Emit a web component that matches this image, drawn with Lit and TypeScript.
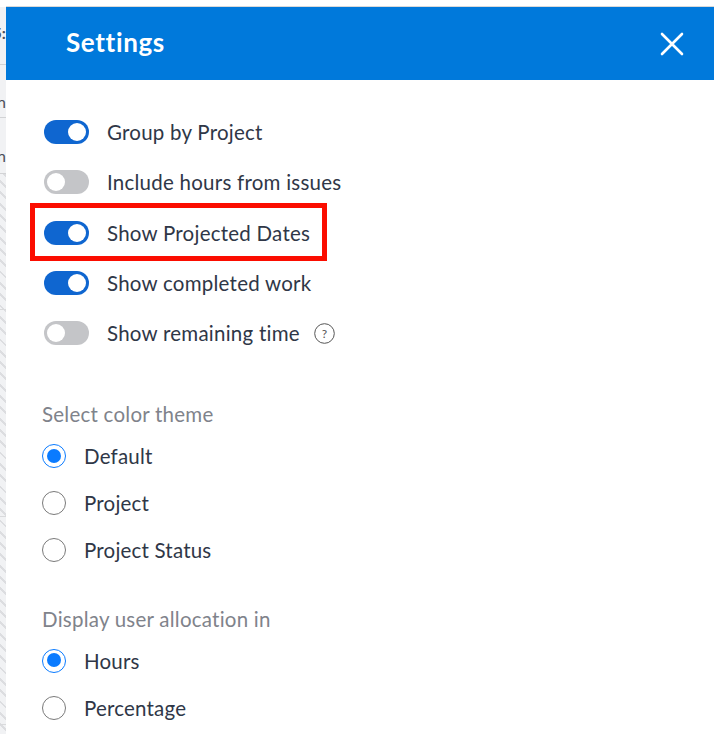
import { LitElement, html, css, svg } from "lit";
import { customElement } from "lit/decorators.js";

const toggles = [
  { label: "Group by Project", on: true },
  { label: "Include hours from issues", on: false },
  { label: "Show Projected Dates", on: true, mark: true },
  { label: "Show completed work", on: true },
  { label: "Show remaining time", on: false, help: true },
];

const cells = [
  { text: "5:", height: 58, shift: -3, bold: true },
  { text: "n", height: 53, shift: 10 },
  { text: "n", height: 56, shift: 10 },
];

@customElement("app-root")
export class AppRoot extends LitElement {
  static styles = css`
    :host {
      display: block;
      width: 714px;
      height: 734px;
      overflow: hidden;
      font-family: "Lato", "Open Sans", sans-serif;
      color: #2f3747;
    }
    .page {
      display: flex;
      height: 734px;
      background: #fff;
    }
    .rail {
      width: 6px;
      flex: none;
      margin-top: 7px;
      display: flex;
      flex-direction: column;
      overflow: hidden;
    }
    .cell {
      flex: none;
      box-sizing: border-box;
      border-bottom: 1px solid #d2d3d5;
      background: #f1f2f4;
      display: flex;
      align-items: center;
      justify-content: flex-end;
      overflow: hidden;
      font-size: 16px;
      color: #4a4f59;
      white-space: nowrap;
    }
    .cell.bold { font-weight: 700; }
    .hatch {
      flex: 1;
      background:
        repeating-linear-gradient(180deg, transparent 0 135px, #d9dadc 135px 136px, transparent 136px 207.5px),
        repeating-linear-gradient(45deg, #f1f2f4 0 6px, #dcdde0 6px 8px);
    }
    .panel {
      flex: 1;
      min-width: 0;
      display: flex;
      flex-direction: column;
    }
    .top { height: 7px; flex: none; border-bottom: 1px solid #d9d9d9; box-sizing: border-box; }
    .head {
      height: 73px;
      flex: none;
      background: #0079db;
      display: flex;
      align-items: center;
      justify-content: space-between;
      padding: 0 30px 0 60px;
      color: #fff;
      font-size: 26px;
      font-weight: 700;
      letter-spacing: 0.65px;
    }
    .head span { padding-bottom: 4px; }
    .head svg { width: 24px; height: 24px; display: block; }
    .toggles {
      display: flex;
      flex-direction: column;
      padding: 27px 0 0 38px;
    }
    .row {
      position: relative;
      display: flex;
      align-items: center;
      height: 50.25px;
      font-size: 20.5px;
      letter-spacing: 0.24px;
    }
    .row.mark::after {
      content: "";
      position: absolute;
      left: -14px;
      top: -5px;
      width: 297px;
      height: 58px;
      box-sizing: border-box;
      border: 5px solid #fb0d00;
    }
    .switch {
      width: 45px;
      height: 24px;
      border-radius: 12px;
      background: #c4c5c8;
      flex: none;
      display: flex;
      align-items: center;
      padding: 3px;
      box-sizing: border-box;
      margin-right: 18px;
    }
    .switch.on { background: #0f66d0; justify-content: flex-end; }
    .knob { width: 18px; height: 18px; border-radius: 50%; background: #fff; }
    .help { margin-left: 14px; width: 21px; height: 21px; display: block; }
    .group { padding-left: 36px; display: flex; flex-direction: column; }
    .title { font-size: 20.5px; letter-spacing: 0.24px; color: #7f838b; line-height: 24px; }
    .radio {
      display: flex;
      align-items: center;
      height: 47px;
      font-size: 20.5px;
      letter-spacing: 0.2px;
    }
    .dot {
      width: 24px;
      height: 24px;
      box-sizing: border-box;
      border-radius: 50%;
      border: 1.5px solid #7a7a7a;
      margin-right: 18px;
      flex: none;
    }
    .dot.on { border-color: #0a7bff; padding: 3.5px; }
    .dot.on::before {
      content: "";
      display: block;
      width: 14px;
      height: 14px;
      border-radius: 50%;
      background: #0a7bff;
    }
    .first { margin-top: 44px; }
    .second { margin-top: 33px; }
    .title + .radio { margin-top: 6.5px; }
  `;

  private radio(label: string, on = false) {
    return html`<div class="radio"><span class="dot ${on ? "on" : ""}"></span><span>${label}</span></div>`;
  }

  render() {
    return html`<div class="page">
      <div class="rail">
        ${cells.map(
          (c) => html`<div class="cell ${c.bold ? "bold" : ""}" style="height:${c.height}px;padding-top:${Math.max(c.shift, 0) * 2}px;padding-bottom:${Math.max(-c.shift, 0) * 2}px">${c.text}</div>`
        )}
        <div class="hatch"></div>
      </div>
      <div class="panel">
        <div class="top"></div>
        <div class="head">
          <span>Settings</span>
          <svg viewBox="0 0 24 24" fill="none" stroke="#fff" stroke-width="2.6" stroke-linecap="round">
            ${svg`<path d="M2 2 L22 22 M22 2 L2 22"></path>`}
          </svg>
        </div>
        <div class="toggles">
          ${toggles.map(
            (t) => html`<div class="row ${t.mark ? "mark" : ""}">
              <div class="switch ${t.on ? "on" : ""}"><div class="knob"></div></div>
              ${t.label}
              ${t.help
                ? html`<svg class="help" viewBox="0 0 21 21">
                    <circle cx="10.5" cy="10.5" r="9.8" fill="none" stroke="#555" stroke-width="1"></circle>
                    <text x="10.5" y="15" text-anchor="middle" font-size="12" fill="#555">?</text>
                  </svg>`
                : ""}
            </div>`
          )}
        </div>
        <div class="group first">
          <div class="title">Select color theme</div>
          ${this.radio("Default", true)}${this.radio("Project")}${this.radio("Project Status")}
        </div>
        <div class="group second">
          <div class="title">Display user allocation in</div>
          ${this.radio("Hours", true)}${this.radio("Percentage")}
        </div>
      </div>
    </div>`;
  }
}
